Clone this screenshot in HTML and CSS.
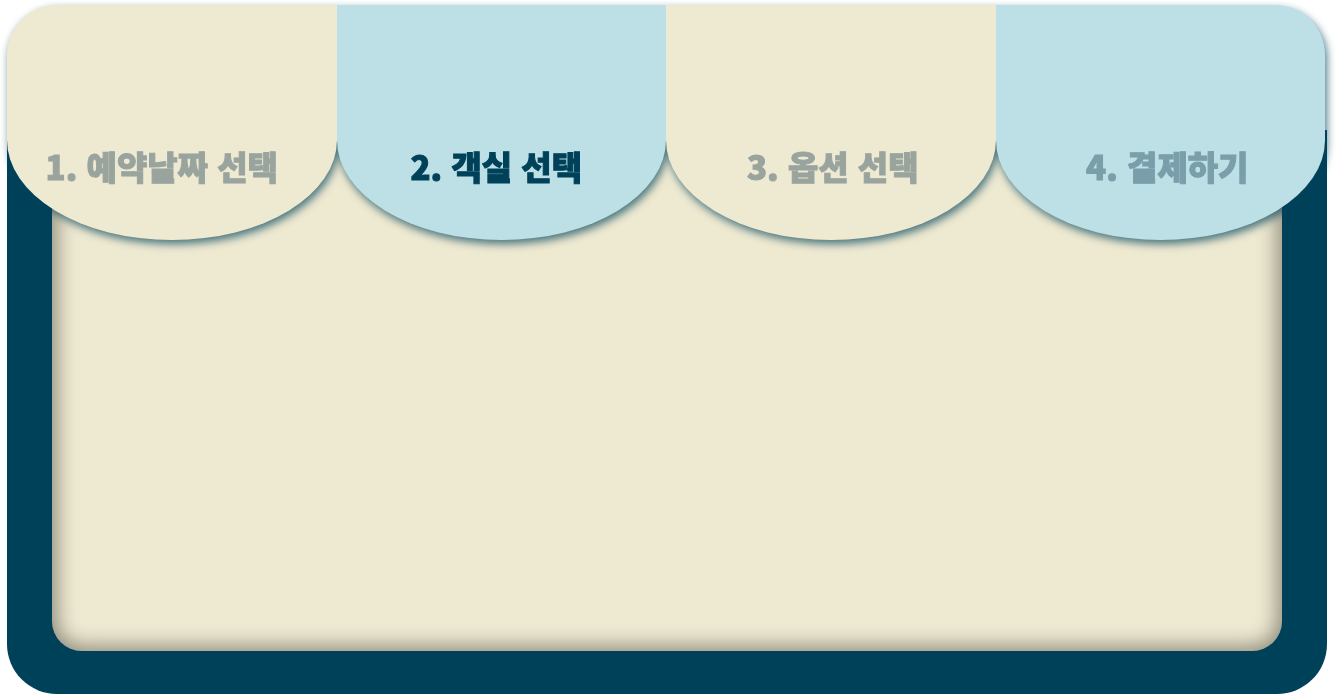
FILE: index.html
```html
<!DOCTYPE html>
<html lang="ko">
<head>
<meta charset="utf-8">
<title>예약</title>
<link rel="stylesheet" href="styles.css">
</head>
<body>
<main class="booking">
  <nav class="awning">
    <button class="tab tab-date" type="button">1. 예약날짜 선택</button>
    <button class="tab tab-room active" type="button">2. 객실 선택</button>
    <button class="tab tab-option" type="button">3. 옵션 선택</button>
    <button class="tab tab-pay" type="button">4. 결제하기</button>
  </nav>
  <section class="frame">
    <div class="panel"></div>
  </section>
</main>
</body>
</html>
```
FILE: styles.css
```css
* {
  box-sizing: border-box;
}

body {
  margin: 0;
  background: #fff;
  font-family: "Noto Sans CJK KR", sans-serif;
}

.booking {
  display: flex;
  flex-direction: column;
  min-height: 100vh;
  padding: 5px 9px 0 7px;
}

.awning {
  position: relative;
  z-index: 1;
  display: grid;
  grid-template-columns: repeat(4, 1fr);
  margin-right: 2px;
  filter: drop-shadow(2px 4px 4px rgba(0, 65, 90, 0.7));
}

.tab {
  height: 235px;
  padding: 86px 0 0;
  border: 0;
  border-radius: 0 0 50% 50% / 0 0 100px 100px;
  background: #eee9d1;
  color: #9aa49e;
  font: 900 33px/48px "Noto Sans CJK KR", sans-serif;
  -webkit-text-stroke: 1px currentColor;
  text-align: center;
  white-space: nowrap;
  cursor: pointer;
}

.tab:nth-child(even) {
  background: #bce0e5;
  color: #7a9eaa;
}

.tab-date {
  padding-right: 20px;
  border-top-left-radius: 50px;
}

.tab-room {
  padding-right: 10px;
}

.tab-option {
  padding-left: 4px;
}

.tab-pay {
  padding-left: 14px;
  border-top-right-radius: 50px;
}

.tab.active {
  color: #00415a;
}

.frame {
  display: flex;
  flex: 1;
  min-height: 564px;
  margin-top: -110px;
  padding: 0 45px 43px;
  border-radius: 0 0 50px 50px;
  background: #00415a;
}

.panel {
  flex: 1;
  border-radius: 0 0 30px 30px;
  background: #eee9d1;
  box-shadow: inset 0 0 20px 5px rgba(0, 0, 0, 0.4);
}
```
